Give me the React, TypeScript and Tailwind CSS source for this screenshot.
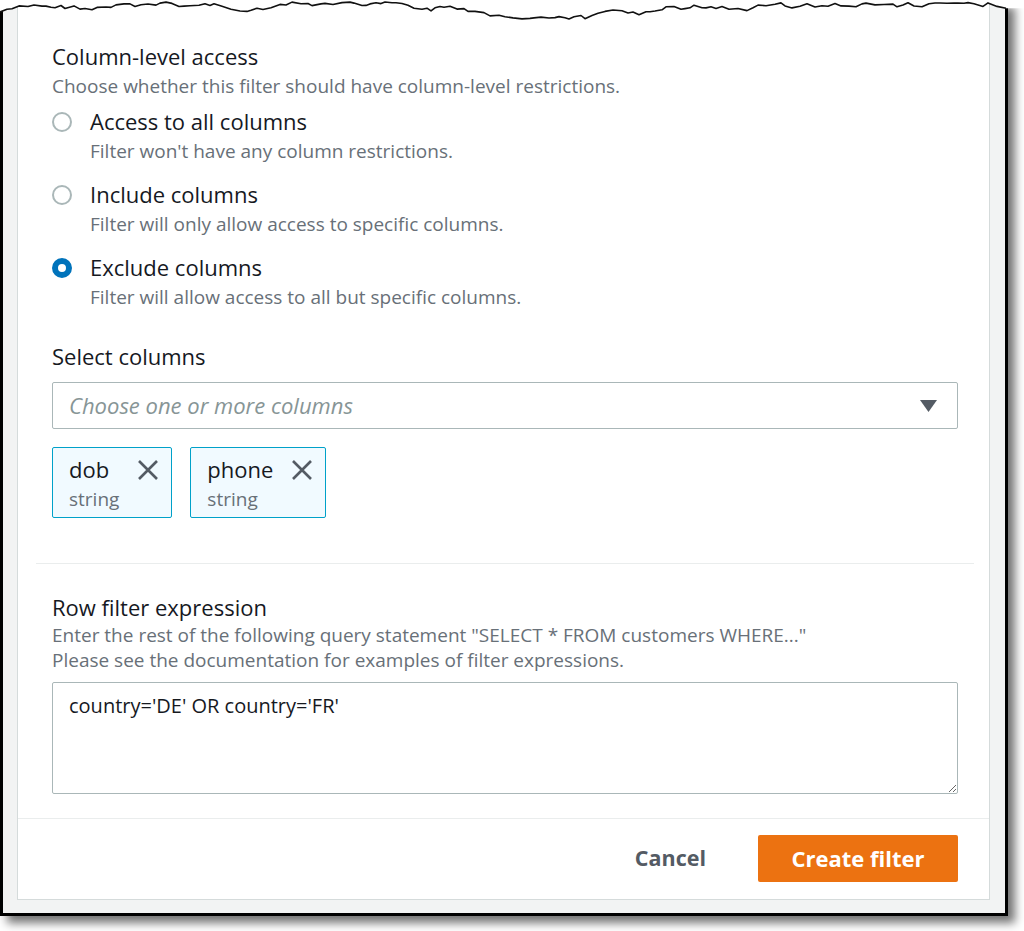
import React from 'react';

const font = { fontFamily: '"Open Sans", Roboto, sans-serif' };

// jagged torn-paper edge along the top of the screenshot frame
const tearPoints = (() => {
  const pts: string[] = [];
  let seed = 7;
  const rnd = () => {
    seed = (seed * 9301 + 49297) % 233280;
    return seed / 233280;
  };
  let y = 12;
  for (let x = 0; x <= 1010; x += 4 + Math.floor(rnd() * 6)) {
    y += (rnd() - 0.5) * 7;
    if (y < 2) y = 2 + rnd() * 2;
    if (y > 19) y = 19 - rnd() * 2;
    pts.push(`${x},${y.toFixed(1)}`);
  }
  return pts;
})();

const Radio = ({ checked }: { checked?: boolean }) =>
  checked ? (
    <span className="mt-[4px] h-[20px] w-[20px] shrink-0 rounded-full border-[6px] border-[#0073bb] bg-white" />
  ) : (
    <span className="mt-[4px] h-[20px] w-[20px] shrink-0 rounded-full border-2 border-[#aab7b8] bg-white" />
  );

const RadioOption = ({
  label,
  desc,
  checked,
  className,
}: {
  label: string;
  desc: string;
  checked?: boolean;
  className?: string;
}) => (
  <div className={`flex gap-[18px] ${className ?? ''}`}>
    <Radio checked={checked} />
    <div>
      <div className="pb-[2px] text-[22px] leading-[26px] text-[#16191f]">{label}</div>
      <div className="mt-[3px] text-[19px] leading-[24px] text-[#687078]">{desc}</div>
    </div>
  </div>
);

const Token = ({ name }: { name: string }) => (
  <div className="flex items-start gap-[18px] rounded-[2px] border border-[#00a1c9] bg-[#f1faff] pb-[6px] pl-[16px] pr-[12px] pt-[8px]">
    <div>
      <div className="pb-[2px] text-[22px] leading-[26px] text-[#16191f]">{name}</div>
      <div className="mt-[3px] text-[19px] leading-[24px] text-[#687078]">string</div>
    </div>
    <svg width="22" height="22" viewBox="0 0 22 22" className="mt-[3px]">
      <path d="M2 2 L20 20 M20 2 L2 20" stroke="#545b64" strokeWidth="2.6" fill="none" />
    </svg>
  </div>
);

const App: React.FC = () => {
  return (
    <div className="relative h-[931px] w-[1024px] overflow-hidden bg-white" style={font}>
      {/* screenshot frame */}
      <div className="flex h-[916px] w-[1008px] flex-col border-x-[3px] border-b-[3px] border-black bg-[#f2f3f3] pb-[13px] pl-[14px] pr-[15px] shadow-[7px_7px_9px_rgba(0,0,0,0.55)]">
        <div className="flex flex-1 flex-col border-x border-b border-[#d5dbdb] bg-white">
          <div className="pl-[18px] pr-[15px]">
            <div className="px-[16px] pb-[45px] pt-[43px]">
              <div className="pb-[2px] text-[22px] leading-[26px] text-[#16191f]">Column-level access</div>
              <div className="mt-[3px] text-[19px] leading-[24px] text-[#687078]">
                Choose whether this filter should have column-level restrictions.
              </div>

              <RadioOption
                className="mt-[10px]"
                label="Access to all columns"
                desc="Filter won't have any column restrictions."
              />
              <RadioOption
                className="mt-[18px]"
                label="Include columns"
                desc="Filter will only allow access to specific columns."
              />
              <RadioOption
                className="mt-[18px]"
                checked
                label="Exclude columns"
                desc="Filter will allow access to all but specific columns."
              />

              <div className="mt-[34px] pb-[2px] text-[22px] leading-[26px] text-[#16191f]">Select columns</div>
              <div className="mt-[11px] flex h-[47px] items-center justify-between rounded-[2px] border border-[#aab7b8] pl-[16px] pr-[20px]">
                <span className="text-[22px] italic text-[#879596]">Choose one or more columns</span>
                <svg width="17" height="12" viewBox="0 0 17 12">
                  <path d="M0 0 H17 L8.5 12 Z" fill="#545b64" />
                </svg>
              </div>

              <div className="mt-[18px] flex gap-[18px]">
                <Token name="dob" />
                <Token name="phone" />
              </div>
            </div>

            <div className="border-t border-[#eaeded] px-[16px] pb-[24px] pt-[30px]">
              <div className="pb-[2px] text-[22px] leading-[26px] text-[#16191f]">Row filter expression</div>
              <div className="mt-[1px] text-[19px] leading-[25px] text-[#687078]">
                Enter the rest of the following query statement "SELECT * FROM customers WHERE..."
                <br />
                Please see the documentation for examples of filter expressions.
              </div>
              <textarea
                className="mt-[9px] block h-[112px] w-full rounded-[2px] border border-[#aab7b8] px-[16px] py-[9px] text-[20px] leading-[28px] text-[#16191f] outline-none"
                style={font}
                defaultValue="country='DE' OR country='FR'"
              />
            </div>
          </div>

          <div className="flex flex-1 items-start justify-end gap-[32px] border-t border-[#eaeded] pr-[31px] pt-[16px]">
            <button className="h-[47px] px-[20px] text-[21.5px] font-bold text-[#545b64]">Cancel</button>
            <button className="h-[47px] w-[200px] rounded-[2px] bg-[#ec7211] text-[22px] font-bold text-white">
              Create filter
            </button>
          </div>
        </div>
      </div>

      {/* torn top edge */}
      <svg className="absolute left-0 top-0" width="1024" height="24" viewBox="0 0 1024 24">
        <polygon points={`0,0 ${tearPoints.join(' ')} 1024,${tearPoints[tearPoints.length - 1].split(',')[1]} 1024,0`} fill="#ffffff" />
        <polyline points={tearPoints.join(' ')} fill="none" stroke="#111" strokeWidth="1.6" strokeLinejoin="round" />
      </svg>
    </div>
  );
};

export default App;
